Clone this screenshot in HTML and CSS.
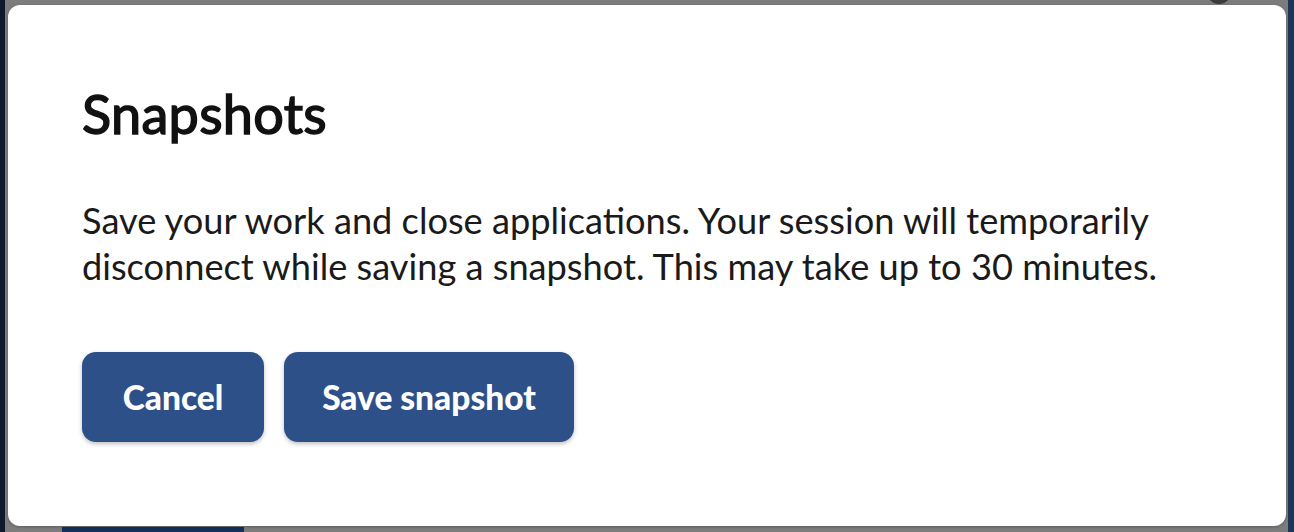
FILE: index.html
```html
<!DOCTYPE html>
<html lang="en">
<head>
    <meta charset="UTF-8">
    <title>Snapshots</title>
    <link rel="stylesheet" href="styles.css">
</head>
<body>
    <div class="fondo-izq"></div>
    <div class="fondo-der"></div>
    <div class="fondo-abajo"></div>
    <div class="fondo-x"></div>

    <div class="modal">
        <h1 class="titulo">Snapshots</h1>
        <p class="texto">Save your work and close applications. Your session will temporarily disconnect while saving a snapshot. This may take up to 30 minutes.</p>
        <div class="acciones">
            <button class="boton boton-cancelar">Cancel</button>
            <button class="boton boton-guardar">Save snapshot</button>
        </div>
    </div>
</body>
</html>
```

FILE: styles.css
```css
body {
    margin: 0;
    width: 1294px;
    height: 532px;
    overflow: hidden;
    background: #7c7c7c;
    font-family: Lato, "Open Sans", sans-serif;
    position: relative;
    padding: 5px 8px 0 8px;
    box-sizing: border-box;
}

.fondo-izq {
    position: absolute;
    left: 0;
    top: 0;
    width: 5px;
    height: 532px;
    background: #0e1a2c;
}

.fondo-der {
    position: absolute;
    right: 0;
    top: 0;
    width: 6px;
    height: 532px;
    background: #1c3558;
}

.fondo-abajo {
    position: absolute;
    left: 62px;
    top: 527px;
    width: 182px;
    height: 5px;
    background: #14305a;
}

.fondo-x {
    position: absolute;
    left: 1208px;
    top: -8px;
    width: 22px;
    height: 12px;
    border-radius: 0 0 10px 10px;
    background: #3a3a3a;
}

.modal {
    position: relative;
    width: 1278px;
    height: 521px;
    box-sizing: border-box;
    background: #ffffff;
    border-radius: 12px;
    padding: 77px 74px 0 74px;
    box-shadow: 0 1px 3px rgba(0, 0, 0, 0.25);
}

.titulo {
    margin: 0;
    font-size: 54px;
    font-weight: 400;
    -webkit-text-stroke: 1.5px #111111;
    letter-spacing: 0.3px;
    line-height: 64px;
    color: #111111;
}

.texto {
    margin: 51px 0 0 0;
    font-size: 36.2px;
    line-height: 46px;
    color: #1a1a1a;
}

.acciones {
    display: flex;
    gap: 20px;
    margin-top: 63px;
}

.boton {
    height: 90px;
    border: none;
    border-radius: 14px;
    background: #2d5089;
    color: #ffffff;
    font-family: Lato, sans-serif;
    font-weight: 900;
    font-size: 33.5px;
    padding: 0;
    box-shadow: 0 2px 4px rgba(0, 0, 0, 0.25);
}

.boton-cancelar {
    width: 182px;
}

.boton-guardar {
    width: 290px;
}
```
